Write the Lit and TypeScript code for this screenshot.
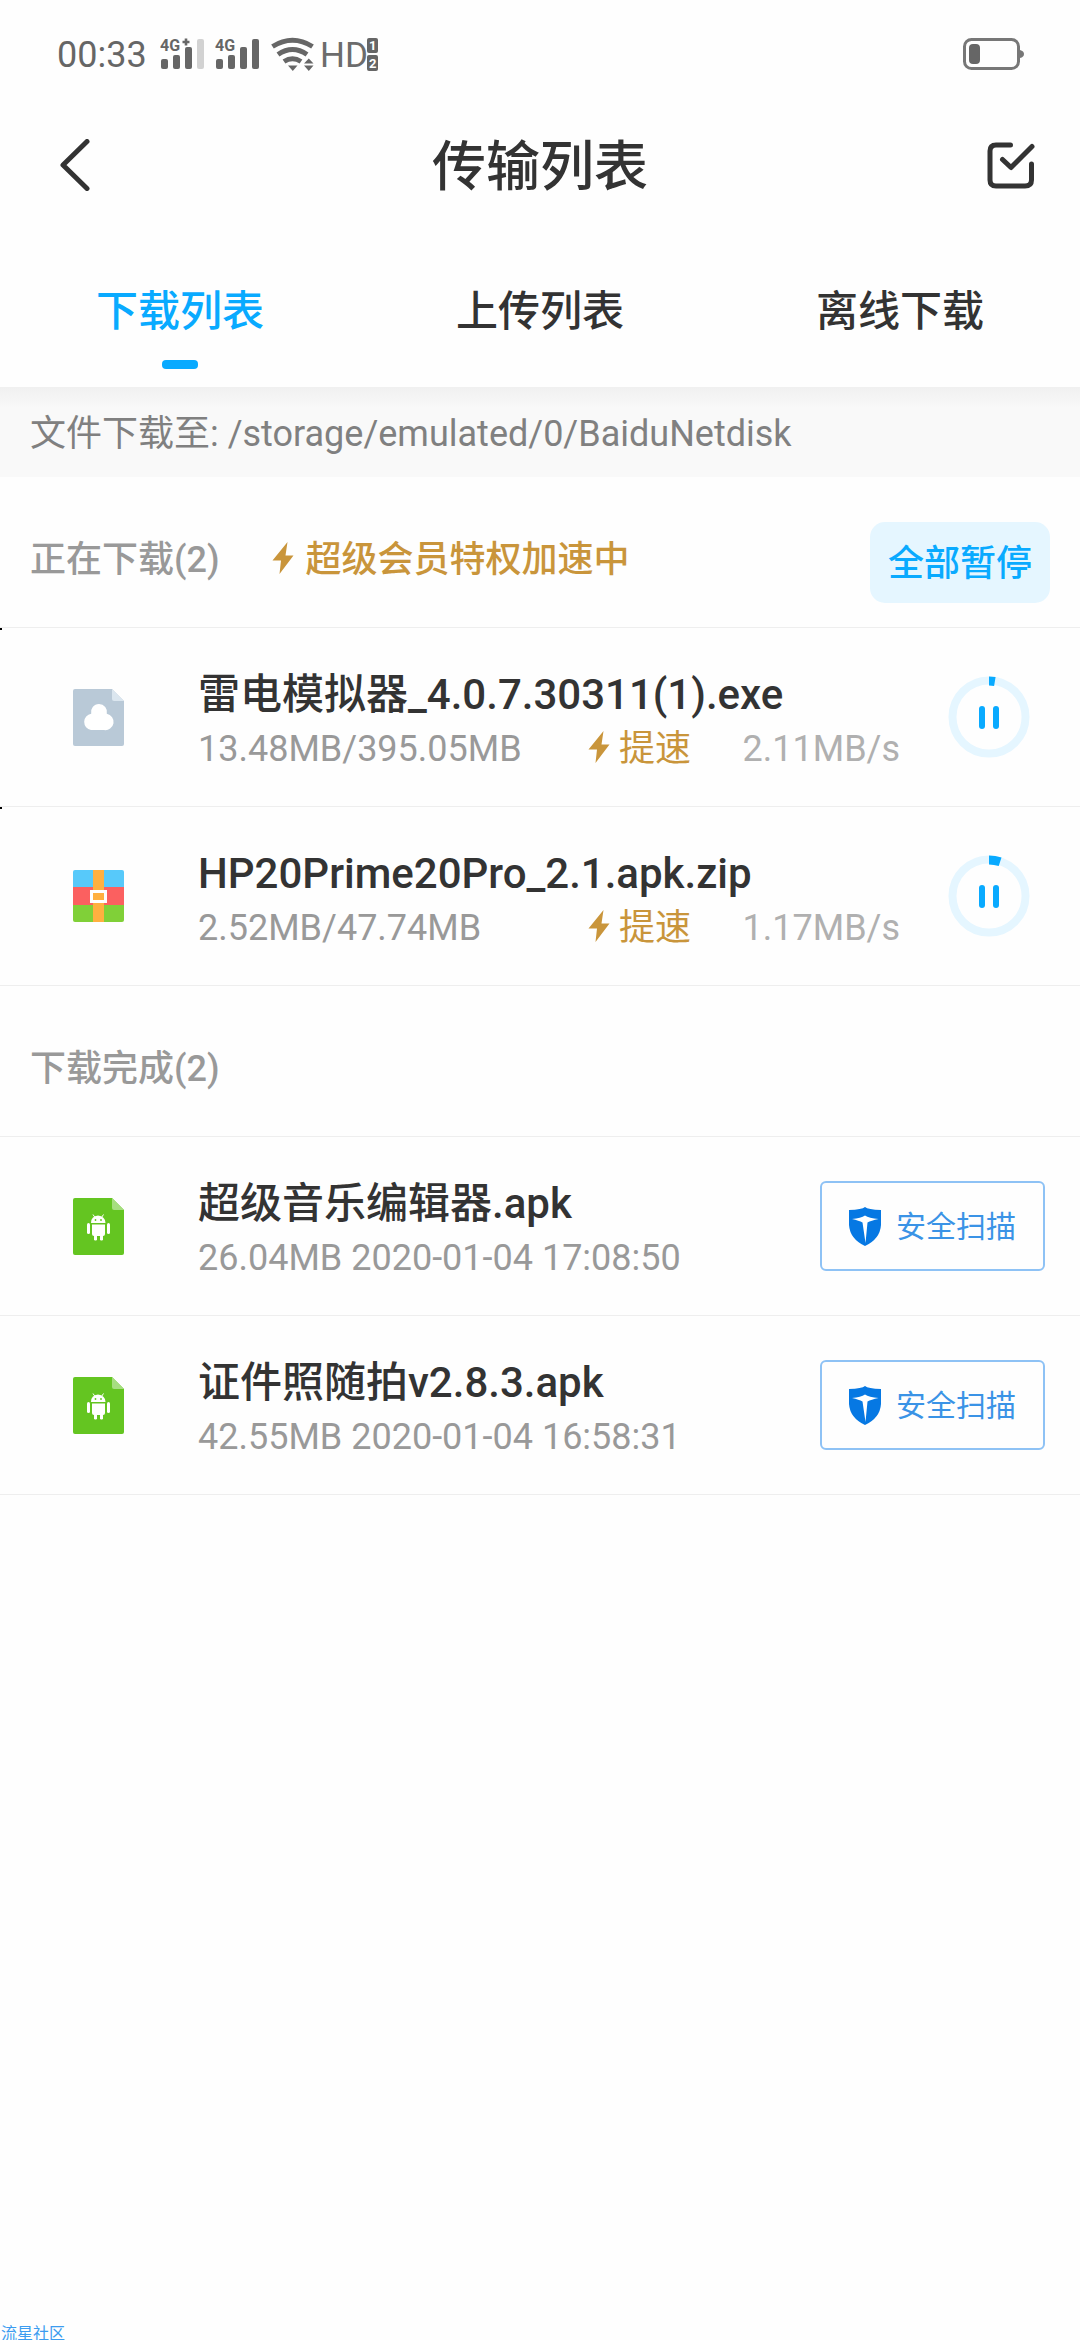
import { LitElement, html, css, svg } from "lit";
import { customElement, property, state } from "lit/decorators.js";

type FileKind = "unknown" | "archive" | "apk";

interface ActiveTask {
  name: string;
  kind: FileKind;
  size: string;
  speed: string;
  progress: number;
  marked: boolean;
}

interface FinishedTask {
  name: string;
  kind: FileKind;
  size: string;
  time: string;
}

const ACTIVE: ActiveTask[] = [
  { name: "雷电模拟器_4.0.7.30311(1).exe", kind: "unknown", size: "13.48MB/395.05MB", speed: "2.11MB/s", progress: 0.026, marked: true },
  { name: "HP20Prime20Pro_2.1.apk.zip", kind: "archive", size: "2.52MB/47.74MB", speed: "1.17MB/s", progress: 0.05, marked: true },
];

const FINISHED: FinishedTask[] = [
  { name: "超级音乐编辑器.apk", kind: "apk", size: "26.04MB", time: "2020-01-04 17:08:50" },
  { name: "证件照随拍v2.8.3.apk", kind: "apk", size: "42.55MB", time: "2020-01-04 16:58:31" },
];

const bolt = html`<svg class="bolt" width="22" height="34" viewBox="0 0 22 34" aria-hidden="true">
  <path d="M15.500 1 L0.500 19.500 H9 L7.500 33 L21.500 14.500 H13.500 Z" fill="#c9953b" />
</svg>`;

/** Phone status strip: clock, signal, wifi, HD mark and battery. */
@customElement("status-bar")
export class StatusBar extends LitElement {
  static styles = css`
    :host {
      display: flex;
      align-items: center;
      height: 108px;
      padding: 0 56px 0 57px;
      color: #666;
      font: 400 36px/36px Roboto, "Noto Sans CJK SC", sans-serif;
    }
    .clock {
      padding-top: 2px;
    }
    svg {
      display: block;
      flex: none;
    }
    .signals {
      margin-left: 13px;
    }
    .battery {
      margin-left: auto;
    }
  `;

  render() {
    return html`
      <span class="clock">00:33</span>
      <svg class="signals" width="220" height="68" viewBox="160 20 220 68" role="img" aria-label="4G+ 4G WiFi HD">
        <g fill="#666">
          <rect x="161" y="59" width="7" height="10" rx="2" />
          <rect x="173" y="55" width="7" height="14" rx="2" />
          <rect x="185" y="47" width="7" height="22" rx="2" />
          <rect x="197" y="39" width="7" height="30" rx="2" fill="#d2d2d2" />
          <rect x="216" y="59" width="7" height="10" rx="2" />
          <rect x="228" y="55" width="7" height="14" rx="2" />
          <rect x="240" y="47" width="7" height="22" rx="2" />
          <rect x="252" y="39" width="7" height="30" rx="2" />
          <text x="160" y="51" font-family="Roboto, sans-serif" font-weight="700" font-size="16">4G</text>
          <path d="M186 38.500 V45.500 M182.500 42 H189.500" stroke="#666" stroke-width="2.600" />
          <text x="215" y="51" font-family="Roboto, sans-serif" font-weight="700" font-size="16">4G</text>
          <path d="M288 65.500 h9.500 l-4.700 5.500z" />
          <path d="M304 63.500 h9.500 l-4.700-5z M304 65.500 h9.500 l-4.700 5.500z" />
        </g>
        <g fill="none" stroke="#666" stroke-width="5">
          <path d="M272.500 46.500 Q292.500 34 312.500 46.500" />
          <path d="M278 54.500 Q292.500 44.500 307 54.500" />
          <path d="M284 61.500 Q292.500 56 301 61.500" />
        </g>
        <text x="320" y="67" fill="#6c6c6c" font-family="Roboto, sans-serif" font-weight="400" font-size="35">HD</text>
        <rect x="367" y="38" width="11" height="15" rx="2" fill="#666" />
        <rect x="367" y="55" width="11" height="16" rx="2" fill="#666" />
        <text x="369" y="50" fill="#fff" font-family="Roboto, sans-serif" font-weight="700" font-size="13">1</text>
        <text x="369" y="68" fill="#fff" font-family="Roboto, sans-serif" font-weight="700" font-size="13">2</text>
      </svg>
      <svg class="battery" width="61" height="32" viewBox="0 0 61 32" role="img" aria-label="电量低">
        <rect x="1.500" y="1.500" width="54" height="29" rx="7" fill="none" stroke="#777" stroke-width="3" />
        <path d="M57 12 q4 1 4 4 t-4 4z" fill="#777" />
        <rect x="6" y="6" width="11" height="20" rx="4" fill="#666" />
      </svg>
    `;
  }
}

/** File type badge shown at the start of each row. */
@customElement("file-icon")
export class FileIcon extends LitElement {
  @property() kind: FileKind = "unknown";

  static styles = css`
    :host {
      display: block;
    }
    svg {
      display: block;
    }
  `;

  private sheet(fill: string, fold: string) {
    return svg`
      <path d="M2 0 H39 L51 12 V55 q0 2-2 2 H2 q-2 0-2-2 V2 q0-2 2-2z" fill=${fill} />
      <path d="M39 0 L51 12 H41 q-2 0-2-2z" fill=${fold} />`;
  }

  render() {
    if (this.kind === "archive") {
      return html`<svg width="51" height="52" viewBox="0 0 51 52" aria-hidden="true">
        <path d="M2 0 H49 q2 0 2 2 V18 H0 V2 q0-2 2-2z" fill="#57c9fa" />
        <rect y="17" width="51" height="18" fill="#fb6060" />
        <path d="M0 35 H51 V50 q0 2-2 2 H2 q-2 0-2-2z" fill="#80d038" />
        <rect x="20" width="11" height="52" fill="#ffb040" />
        <rect x="18.500" y="21.500" width="14" height="10" fill="#ffb040" stroke="#fff" stroke-width="3" />
      </svg>`;
    }
    if (this.kind === "apk") {
      return html`<svg width="51" height="57" viewBox="0 0 51 57" aria-hidden="true">
        ${this.sheet("#64c521", "#a6de80")}
        <g fill="#fff">
          <path d="M18 25 q0-7 7-7.500 q7 .5 7.500 7.500z" />
          <path d="M19 26.500 H32 V36 q0 2-2 2 H21 q-2 0-2-2z" />
          <rect x="14" y="25" width="3" height="11" rx="1.500" />
          <rect x="34" y="25" width="3" height="11" rx="1.500" />
          <rect x="21" y="37" width="3" height="5.500" rx="1.200" />
          <rect x="27" y="37" width="3" height="5.500" rx="1.200" />
        </g>
        <path d="M20 16.500 l2 3 M30.500 16.500 l-2 3" stroke="#fff" stroke-width="1" />
        <circle cx="22.500" cy="22" r="0.900" fill="#64c521" />
        <circle cx="28" cy="22" r="0.900" fill="#64c521" />
      </svg>`;
    }
    return html`<svg width="51" height="57" viewBox="0 0 51 57" aria-hidden="true">
      ${this.sheet("#b9c9d7", "#dbe6ef")}
      <path d="M18.200 24.800 A8 8 0 1 1 33.800 24.800 A8.200 8.200 0 0 1 31 41 H18 A8.200 8.200 0 0 1 18.200 24.800z" fill="#fff" />
    </svg>`;
  }
}

/** Round pause control with a progress ring. */
@customElement("progress-pause")
export class ProgressPause extends LitElement {
  @property({ type: Number }) progress = 0;
  @property() label = "";

  static styles = css`
    :host {
      display: block;
    }
    button {
      display: block;
      padding: 0;
      border: 0;
      background: none;
    }
    svg {
      display: block;
    }
  `;

  render() {
    const r = 36;
    const length = 2 * Math.PI * r;
    return html`<button type="button" aria-label=${this.label}>
      <svg width="82" height="82" viewBox="0 0 82 82" aria-hidden="true">
        <circle cx="41" cy="41" r="36.500" fill="none" stroke="#e5f6ff" stroke-width="8" />
        <circle cx="41" cy="41" r=${r} fill="none" stroke="#09aaff" stroke-width="9"
          stroke-dasharray="${length * this.progress} ${length}" transform="rotate(-90 41 41)" />
        <rect x="31" y="30" width="6" height="23" rx="3" fill="#09aaff" />
        <rect x="45" y="30" width="6" height="23" rx="3" fill="#09aaff" />
      </svg>
    </button>`;
  }
}

@customElement("app-root")
export class AppRoot extends LitElement {
  @state() private tab = 0;

  static styles = css`
    :host {
      display: flex;
      flex-direction: column;
      min-height: 100vh;
      background: #fefefe;
      color: #333;
      font: 400 36px/54px Roboto, "Noto Sans CJK SC", sans-serif;
    }
    * {
      box-sizing: border-box;
    }
    button {
      padding: 0;
      border: 0;
      background: none;
      color: inherit;
      font: inherit;
    }
    h1,
    h2,
    h3,
    p,
    ul {
      margin: 0;
      padding: 0;
      font: inherit;
      list-style: none;
    }
    svg {
      display: block;
      flex: none;
    }
    .top {
      display: grid;
      grid-template-columns: 120px 1fr 120px;
      align-items: center;
      height: 114px;
      text-align: center;
    }
    .top h1 {
      padding-top: 6px;
      font-weight: 500;
      font-size: 54px;
      line-height: 80px;
    }
    .back {
      justify-self: start;
      padding-left: 60px;
    }
    .edit {
      justify-self: end;
      padding-right: 45px;
    }
    .tabs {
      display: grid;
      grid-template-columns: repeat(3, 1fr);
    }
    .tab {
      display: flex;
      flex-direction: column;
      align-items: center;
      gap: 16px;
      height: 165px;
      padding-top: 58px;
      font-weight: 500;
      font-size: 42px;
      line-height: 64px;
    }
    .tab.selected {
      color: #09aaff;
    }
    .tab.selected::after {
      content: "";
      width: 36px;
      height: 9px;
      border-radius: 4px;
      background: #09aaff;
    }
    .path {
      height: 90px;
      padding: 20px 30px 0;
      background: linear-gradient(#f0f0f0, #f5f5f5 12px, #f9f9f9 20px);
      color: #808080;
    }
    .section {
      display: flex;
      align-items: center;
      height: 151px;
      padding: 20px 30px 0;
      border-bottom: 1px solid #eee;
      color: #999;
      font-weight: 500;
    }
    .section h2 {
      padding-bottom: 4px;
    }
    .boost {
      display: flex;
      align-items: center;
      gap: 9px;
      color: #c9953b;
    }
    .bolt {
      margin-bottom: 4px;
    }
    .section .boost {
      gap: 12px;
      margin-left: 52px;
      padding-bottom: 4px;
    }
    .pause-all {
      width: 180px;
      height: 81px;
      margin-left: auto;
      padding-top: 3px;
      border-radius: 15px;
      background: #e5f6ff;
      color: #09aaff;
    }
    .row {
      position: relative;
      display: flex;
      align-items: center;
      height: 179px;
      border-bottom: 1px solid #eee;
    }
    .row.marked::before {
      content: "";
      position: absolute;
      top: 0;
      left: 0;
      width: 2px;
      height: 2px;
      background: #000;
    }
    .icon {
      flex: none;
      width: 198px;
      padding-left: 73px;
    }
    .info {
      flex: 1;
      min-width: 0;
      padding-top: 10px;
    }
    .name {
      font-weight: 500;
      font-size: 42px;
      line-height: 54px;
      white-space: nowrap;
    }
    .meta {
      display: flex;
      align-items: center;
      color: #999;
    }
    .size {
      flex: 1;
    }
    .speed {
      width: 209px;
      color: #b0b0b0;
      text-align: right;
    }
    .row progress-pause {
      margin: 0 50px 0 48px;
    }
    .scan {
      display: flex;
      align-items: center;
      justify-content: center;
      gap: 15px;
      width: 225px;
      height: 90px;
      margin-right: 35px;
      border: 2px solid #8ec2f5;
      border-radius: 6px;
      color: #3a93e6;
      font-size: 30px;
      line-height: 45px;
    }
    .source {
      margin-top: auto;
      padding-left: 1px;
      color: #3c9cf0;
      font-family: "Noto Sans CJK SC", sans-serif;
      font-size: 16px;
      line-height: 24px;
      height: 20px;
    }
  `;

  private renderActive(task: ActiveTask) {
    return html`<li class="row ${task.marked ? "marked" : ""}">
      <file-icon class="icon" .kind=${task.kind}></file-icon>
      <div class="info">
        <h3 class="name">${task.name}</h3>
        <div class="meta">
          <span class="size">${task.size}</span>
          <button class="boost" type="button">${bolt}提速</button>
          <span class="speed">${task.speed}</span>
        </div>
      </div>
      <progress-pause .progress=${task.progress} .label=${`暂停 ${task.name}`}></progress-pause>
    </li>`;
  }

  private renderFinished(task: FinishedTask) {
    return html`<li class="row">
      <file-icon class="icon" .kind=${task.kind}></file-icon>
      <div class="info">
        <h3 class="name">${task.name}</h3>
        <p class="meta">${task.size} ${task.time}</p>
      </div>
      <button class="scan" type="button">
        <svg width="32" height="39" viewBox="0 0 32 39" aria-hidden="true">
          <path d="M16 0 Q19 2.500 32 3 V18 Q31 32 16 39 Q1 32 0 18 V3 Q13 2.500 16 0z" fill="#0678e3" />
          <path d="M3 12 Q12 11 16 8.500 Q20 11 29.500 12 Q22 13.500 18.500 15.500 L16.500 36 L13.500 15.500 Q10 13.500 3 12z" fill="#fff" />
        </svg>
        安全扫描
      </button>
    </li>`;
  }

  render() {
    const tabs = ["下载列表", "上传列表", "离线下载"];
    return html`
      <status-bar></status-bar>
      <header class="top">
        <button class="back" type="button" aria-label="返回">
          <svg width="30" height="52" viewBox="0 0 30 52" aria-hidden="true">
            <path d="M27 2.500 L3 26 L27 49.500" fill="none" stroke="#333" stroke-width="5" stroke-linecap="round" stroke-linejoin="round" />
          </svg>
        </button>
        <h1>传输列表</h1>
        <button class="edit" type="button" aria-label="选择">
          <svg width="48" height="47" viewBox="0 0 48 47" aria-hidden="true">
            <g fill="none" stroke="#333" stroke-width="5" stroke-linecap="round" stroke-linejoin="round">
              <path d="M23.500 3 H9 Q3 3 3 9 V38 Q3 44 9 44 H38 Q44.500 44 44.500 38 V22" />
              <path d="M15.500 17.500 L24 25.500 L45 4.500" />
            </g>
          </svg>
        </button>
      </header>
      <nav class="tabs" role="tablist">
        ${tabs.map(
          (label, i) => html`<button
            class="tab ${i === this.tab ? "selected" : ""}"
            type="button"
            role="tab"
            aria-selected=${i === this.tab ? "true" : "false"}
            @click=${() => (this.tab = i)}
          >${label}</button>`
        )}
      </nav>
      <p class="path">文件下载至: /storage/emulated/0/BaiduNetdisk</p>
      <section>
        <div class="section">
          <h2>正在下载(2)</h2>
          <span class="boost">${bolt}超级会员特权加速中</span>
          <button class="pause-all" type="button">全部暂停</button>
        </div>
        <ul>${ACTIVE.map((t) => this.renderActive(t))}</ul>
      </section>
      <section>
        <div class="section">
          <h2>下载完成(2)</h2>
        </div>
        <ul>${FINISHED.map((t) => this.renderFinished(t))}</ul>
      </section>
      <footer class="source">流星社区</footer>
    `;
  }
}
